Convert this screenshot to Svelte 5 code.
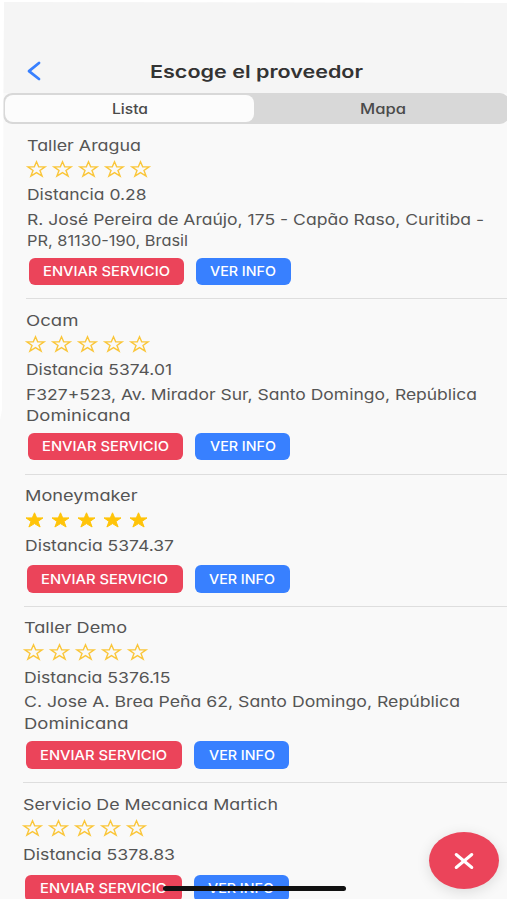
<script lang="ts">
	interface Line {
		text: string;
		width: number;
	}

	interface Provider {
		name: Line;
		rating: number;
		distance: Line;
		address: Line[];
		inset: number;
		sendWidth: number;
	}

	const STAR = 'M9.5 0.8 L11.7 5.9 L18 5.9 L13 9.4 L15.1 15 L9.5 11.6 L3.9 15 L6 9.4 L1 5.9 L7.3 5.9 Z';

	const providers: Provider[] = [
		{
			name: { text: 'Taller Aragua', width: 114 },
			rating: 0,
			distance: { text: 'Distancia 0.28', width: 119.5 },
			address: [
				{ text: 'R. José Pereira de Araújo, 175 - Capão Raso, Curitiba -', width: 457 },
				{ text: 'PR, 81130-190, Brasil', width: 161 }
			],
			inset: 27,
			sendWidth: 155
		},
		{
			name: { text: 'Ocam', width: 52.5 },
			rating: 0,
			distance: { text: 'Distancia 5374.01', width: 146 },
			address: [
				{ text: 'F327+523, Av. Mirador Sur, Santo Domingo, República', width: 451 },
				{ text: 'Dominicana', width: 104.5 }
			],
			inset: 26,
			sendWidth: 155.5
		},
		{
			name: { text: 'Moneymaker', width: 112.5 },
			rating: 5,
			distance: { text: 'Distancia 5374.37', width: 149 },
			address: [],
			inset: 25,
			sendWidth: 156
		},
		{
			name: { text: 'Taller Demo', width: 103 },
			rating: 0,
			distance: { text: 'Distancia 5376.15', width: 146.5 },
			address: [
				{ text: 'C. Jose A. Brea Peña 62, Santo Domingo, República', width: 436 },
				{ text: 'Dominicana', width: 104.5 }
			],
			inset: 24,
			sendWidth: 156.5
		},
		{
			name: { text: 'Servicio De Mecanica Martich', width: 255 },
			rating: 0,
			distance: { text: 'Distancia 5378.83', width: 152 },
			address: [],
			inset: 23,
			sendWidth: 157
		}
	];

	let tab = $state('lista');
</script>

{#snippet label(text: string, width: number)}
	<svg class="label" {width} height="22">
		<text x="0" y="15.5" textLength={width} lengthAdjust="spacingAndGlyphs">{text}</text>
	</svg>
{/snippet}

<main class="page">
	<header>
		<button class="back" aria-label="Volver">
			<svg width="14" height="20" viewBox="0 0 14 20">
				<path d="M12 2 L2 10.2 L12 18" />
			</svg>
		</button>
		<h1>{@render label('Escoge el proveedor', 213)}</h1>
	</header>

	<nav class="segment">
		<button class:active={tab === 'lista'} onclick={() => (tab = 'lista')}>
			{@render label('Lista', 36)}
		</button>
		<button class:active={tab === 'mapa'} onclick={() => (tab = 'mapa')}>
			{@render label('Mapa', 46)}
		</button>
	</nav>

	<div class="list">
		{#each providers as p, i (i)}
			<section class="provider" style="margin-left: {p.inset - 1}px">
				<div class="name">{@render label(p.name.text, p.name.width)}</div>
				<div class="stars">
					{#each Array(5) as _, n (n)}
						<svg class="star" class:filled={n < p.rating} width="19" height="16">
							<path d={STAR} />
						</svg>
					{/each}
				</div>
				<div class="distance">{@render label(p.distance.text, p.distance.width)}</div>
				{#each p.address as line (line.text)}
					<div class="address">{@render label(line.text, line.width)}</div>
				{/each}
				<div class="actions">
					<button class="send" style="width: {p.sendWidth}px">
						{@render label('ENVIAR SERVICIO', 127)}
					</button>
					<button class="info">{@render label('VER INFO', 66)}</button>
				</div>
			</section>
		{/each}
	</div>
</main>

<button class="fab" aria-label="Cerrar">
	<svg width="22" height="18" viewBox="0 0 22 18">
		<path d="M3.2 2.5 L18.8 15.5 M18.8 2.5 L3.2 15.5" />
	</svg>
</button>
<div class="home-indicator"></div>

<style>
	:global(body) {
		background: #fff;
		overflow: hidden;
	}
	.page {
		box-sizing: border-box;
		width: 507px;
		height: 899px;
		overflow: hidden;
		background: #f9f9f9;
		clip-path: polygon(4px 2px, 100% 3px, 100% 100%, 0 100%, 0 420px, 2px 410px);
		font-family: Inter, 'Open Sans', sans-serif;
	}
	button {
		border: 0;
		padding: 0;
		background: none;
		display: flex;
		align-items: center;
		justify-content: center;
		cursor: pointer;
	}
	.label {
		display: block;
		flex: none;
		overflow: visible;
		font-family: Inter, 'Open Sans', sans-serif;
		font-size: 15px;
		font-feature-settings: 'cv11';
		fill: #555;
	}
	header {
		box-sizing: border-box;
		height: 93px;
		padding: 48px 0 0 26.5px;
		display: flex;
		align-items: center;
		background: #f5f5f5;
	}
	.back path {
		fill: none;
		stroke: #3880ff;
		stroke-width: 2.8;
		stroke-linecap: round;
		stroke-linejoin: round;
	}
	h1 {
		margin: 4px 0 0 109px;
	}
	h1 :global(.label) {
		font-size: 17.5px;
		font-weight: 600;
		fill: #333;
	}
	.segment {
		box-sizing: border-box;
		width: 506px;
		height: 31px;
		margin-left: 3px;
		padding: 2px;
		display: grid;
		grid-template-columns: 249px 1fr;
		background: #d8d8d8;
		border-radius: 9px;
	}
	.segment button {
		border-radius: 8px;
	}
	.segment button:last-child {
		padding-left: 4px;
	}
	.segment button.active {
		background: #fcfcfc;
	}
	.segment :global(.label) {
		font-size: 14px;
		font-weight: 500;
		fill: #4a4a4a;
	}
	.provider {
		padding: 10.5px 0 13px 1px;
		border-bottom: 1px solid #dedede;
	}
	.provider:nth-child(2),
	.provider:nth-child(4) {
		padding-bottom: 13.5px;
	}
	.name {
		height: 22px;
	}
	.stars {
		height: 25px;
		display: flex;
		align-items: center;
		gap: 7px;
	}
	.star {
		flex: none;
		overflow: visible;
	}
	.star path {
		fill: none;
		stroke: #fac63a;
		stroke-width: 1.4;
		stroke-linejoin: miter;
	}
	.star.filled path {
		fill: #ffc409;
		stroke: #ffc409;
		stroke-width: 1;
	}
	.distance {
		height: 27px;
		display: flex;
		align-items: center;
	}
	.address {
		height: 21.5px;
	}
	.provider:nth-child(4) .address {
		height: 22px;
	}
	.actions {
		display: flex;
		gap: 12px;
		margin: 6px 0 0 1.5px;
	}
	.actions button {
		height: 27.5px;
		border-radius: 6px;
	}
	.provider:nth-child(5) .distance {
		padding-top: 1px;
	}
	.actions :global(.label) {
		font-size: 13.5px;
		font-weight: 500;
		fill: #fff;
	}
	.send {
		background: #eb445a;
	}
	.info {
		width: 95px;
		background: #3880ff;
	}
	.fab {
		position: absolute;
		left: 429px;
		top: 832px;
		width: 70px;
		height: 57px;
		border-radius: 50%;
		background: #eb445a;
		box-shadow: 0 3px 14px rgba(0, 0, 0, 0.12);
	}
	.fab path {
		fill: none;
		stroke: #fff;
		stroke-width: 3;
		stroke-linecap: round;
	}
	.home-indicator {
		position: absolute;
		left: 163px;
		top: 886px;
		width: 183px;
		height: 5px;
		border-radius: 3px;
		background: #111;
	}
</style>
